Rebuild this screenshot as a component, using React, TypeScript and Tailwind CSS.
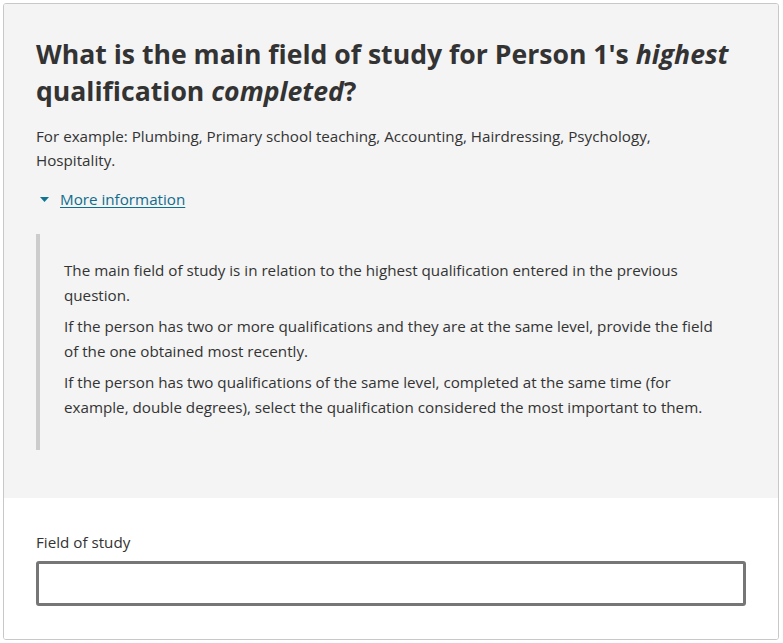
const font = { fontFamily: '"Open Sans", "Noto Sans", sans-serif' };

const notes = [
  'The main field of study is in relation to the highest qualification entered in the previous question.',
  'If the person has two or more qualifications and they are at the same level, provide the field of the one obtained most recently.',
  'If the person has two qualifications of the same level, completed at the same time (for example, double degrees), select the qualification considered the most important to them.',
];

export default function App() {
  return (
    <div className="min-h-screen bg-white pt-[3px] pl-[3px]" style={font}>
      <div className="w-[776px] h-[637px] border border-[#c8c8c8] rounded-[3px] overflow-hidden flex flex-col text-[#333333]">
        <section className="bg-[#f4f4f4] h-[494px] px-8 pt-8">
          <h1 className="text-[26.6px] leading-[37px] font-bold">
            What is the main field of study for Person 1's <em>highest</em> qualification <em>completed</em>?
          </h1>
          <p className="mt-[14px] max-w-[660px] text-[15.2px] leading-6">
            For example: Plumbing, Primary school teaching, Accounting, Hairdressing, Psychology, Hospitality.
          </p>
          <div className="mt-[15px] flex items-center h-6">
            <svg width="9" height="5" viewBox="0 0 9 5" className="ml-[4px] mr-[11px] text-[#0e7490]">
              <path d="M0 0h9L4.5 5z" fill="currentColor" />
            </svg>
            <a href="#" className="text-[15.2px] text-[#0f6d8e] underline underline-offset-2">
              More information
            </a>
          </div>
          <div className="mt-[23px] border-l-4 border-[#cccccc] pl-6 pt-6 pb-[30px] h-[216px]">
            {notes.map((n) => (
              <p key={n} className="max-w-[660px] text-[15.2px] leading-[25px] mb-[6px]">
                {n}
              </p>
            ))}
          </div>
        </section>
        <section className="flex-1 bg-white px-8 pt-8">
          <label className="block text-[15.2px] leading-6">Field of study</label>
          <input
            type="text"
            className="mt-[7px] block w-[710px] h-[45px] border-[3px] border-[#767676] rounded-[3px] bg-white outline-none"
          />
        </section>
      </div>
    </div>
  );
}
